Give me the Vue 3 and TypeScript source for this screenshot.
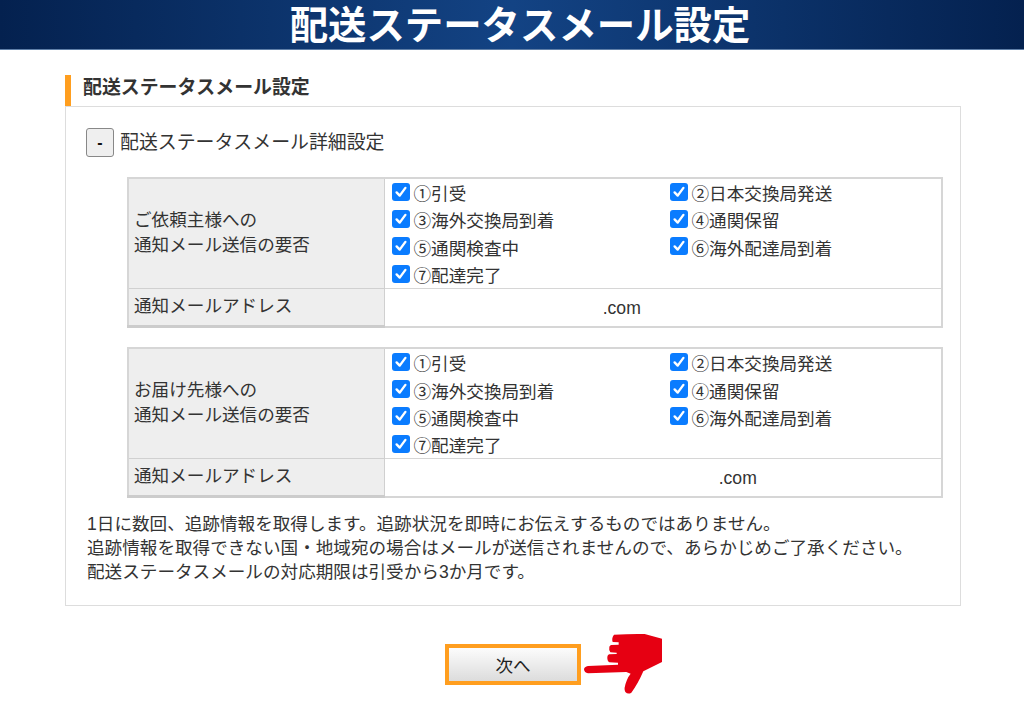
<script setup lang="ts">
const labels = ['①引受', '②日本交換局発送', '③海外交換局到着', '④通関保留', '⑤通関検査中', '⑥海外配達局到着', '⑦配達完了']
const groups = [
  { lines: ['ご依頼主様への', '通知メール送信の要否'], mail: 'first' },
  { lines: ['お届け先様への', '通知メール送信の要否'], mail: 'second' },
]
</script>

<template>
  <div class="page">
    <header class="top"><h1>配送ステータスメール設定</h1></header>
    <main class="content">
      <h2 class="heading">配送ステータスメール設定</h2>
      <section class="box">
        <div class="toggle-row">
          <button class="toggle" type="button">-</button>
          <span class="toggle-label">配送ステータスメール詳細設定</span>
        </div>
        <table v-for="g in groups" :key="g.mail" class="opts">
          <tbody>
            <tr class="row-a">
              <th><div v-for="l in g.lines" :key="l">{{ l }}</div></th>
              <td>
                <div class="checks">
                  <label v-for="l in labels" :key="l" class="check">
                    <span class="tick">
                      <svg viewBox="0 0 18 18" width="18" height="18"><path d="M4.6 9.4 7.7 12.6 13.4 4.9" fill="none" stroke="#fff" stroke-width="2.4" stroke-linecap="round" stroke-linejoin="round" /></svg>
                    </span>
                    <span>{{ l }}</span>
                  </label>
                </div>
              </td>
            </tr>
            <tr class="row-b">
              <th>通知メールアドレス</th>
              <td><span :class="['mail', g.mail]">.com</span></td>
            </tr>
          </tbody>
        </table>
        <div class="note">
          <p>1日に数回、追跡情報を取得します。追跡状況を即時にお伝えするものではありません。</p>
          <p>追跡情報を取得できない国・地域宛の場合はメールが送信されませんので、あらかじめご了承ください。</p>
          <p>配送ステータスメールの対応期限は引受から3か月です。</p>
        </div>
      </section>
      <div class="actions">
        <div class="next-wrap">
          <button class="next" type="button">次へ</button>
          <svg class="hand" viewBox="0 0 270 204" width="90" height="68">
            <path fill="#e60012" d="M108 14 Q160 11 200 12 L252 26 L252 96 L196 124 Q178 165 160 188 Q150 194 142 186 Q136 176 146 152 Q150 140 158 131 L145 126 L30 130 Q19 128 18 118 Q19 110 30 108 L120 104 L120 98 L94 97 Q87 92 88 80 Q89 74 94 73 L116 72 L116 68 L97 67 Q92 60 94 50 Q96 46 100 45 L122 44 L122 37 L104 36 Q100 24 108 14 Z" />
          </svg>
        </div>
      </div>
    </main>
  </div>
</template>

<style>
html, body { margin: 0; background: #fff; }
</style>

<style scoped>
.page {
  font-family: "Liberation Sans", "Noto Sans CJK JP", sans-serif;
  color: #333;
  width: 1024px;
  height: 702px;
  overflow: hidden;
}
.top {
  height: 49px;
  border-bottom: 1px solid #5f7fa8;
  background: linear-gradient(90deg, #04214f 0%, #134384 50%, #04214f 100%);
  display: flex;
  justify-content: center;
}
h1 {
  margin: 0;
  padding: 0 0 0 16px;
  font-size: 38.4px;
  line-height: 49px;
  height: 49px;
  margin-top: 1px;
  font-weight: 700;
  color: #fff;
}
.content { padding: 25px 63px 0 65px; }
.heading {
  margin: 0;
  height: 31px;
  box-sizing: border-box;
  border-left: 6px solid #ff9e1f;
  padding-left: 12px;
  font-size: 18.9px;
  line-height: 26px;
  font-weight: 700;
}
.box {
  box-sizing: border-box;
  height: 500px;
  border: 1px solid #ddd;
  padding: 21px 18px 0 20px;
}
.toggle-row {
  display: flex;
  align-items: center;
  gap: 6px;
  font-size: 18.9px;
  height: 29px;
  margin-bottom: 20px;
}
.toggle-label { padding-bottom: 5px; }
.toggle {
  box-sizing: border-box;
  width: 28px;
  height: 29px;
  padding: 0;
  border: 1px solid #888;
  border-radius: 3px;
  background: #efefef;
  color: #111;
  font: 700 16px "Liberation Sans", sans-serif;
}
.opts {
  box-sizing: border-box;
  width: 816px;
  height: 150px;
  margin: 0 0 19px 41px;
  border-collapse: collapse;
  table-layout: fixed;
  border: 2px solid #d6d6d6;
  font-size: 17.6px;
}
th {
  width: 256px;
  box-sizing: border-box;
  background: #eee;
  border: 1px solid #d0d0d0;
  border-bottom: 3px solid #ccc;
  padding: 0 6px 2px 5px;
  text-align: left;
  font-weight: 400;
  line-height: 25px;
}
.row-a th { border-bottom: 1px solid #d0d0d0; padding-bottom: 1px; }
td {
  padding: 0;
  border-bottom: 1px solid #d6d6d6;
}
.row-a { height: 109px; }
.row-b { height: 38px; }
.checks {
  display: grid;
  grid-template-columns: 278px 1fr;
  padding-left: 7px;
  grid-auto-rows: 27.3px;
}
.check {
  display: flex;
  align-items: center;
  gap: 4px;
  white-space: nowrap;
}
.tick {
  width: 18px;
  height: 18px;
  margin-top: -2px;
  border-radius: 3px;
  background: #0a7cff;
  display: block;
}
.tick svg { display: block; }
.mail { display: block; text-align: center; padding-top: 2px; }
.mail.first { padding-right: 82px; }
.mail.second { padding-left: 150px; }
.note { margin-left: 1px; margin-top: -5px; font-size: 17.6px; line-height: 24px; }
.note p { margin: 0; }
.actions { display: flex; justify-content: center; padding: 38px 0 0 0; }
.next-wrap { position: relative; }
.next {
  box-sizing: border-box;
  display: block;
  width: 136px;
  height: 41px;
  border: 4px solid #ff9e1f;
  background: linear-gradient(180deg, #fcfcfc, #dcdcdc);
  color: #222;
  font: 400 17.6px "Liberation Sans", "Noto Sans CJK JP", sans-serif;
  padding: 0;
}
.hand {
  position: absolute;
  left: 133px;
  top: -14px;
}
</style>
